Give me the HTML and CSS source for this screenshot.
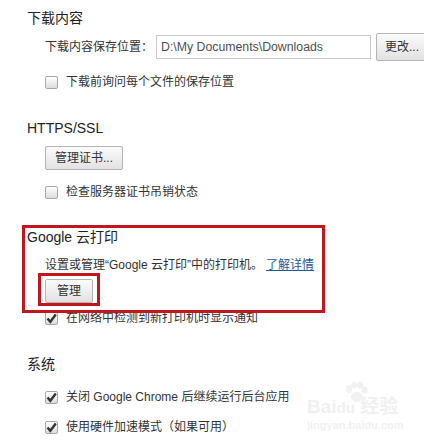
FILE: index.html
```html
<!DOCTYPE html>
<html lang="zh-CN">
<head>
    <meta charset="UTF-8">
    <title>设置</title>
    <link rel="stylesheet" href="styles.css">
</head>
<body>
    <!-- 下载内容 -->
    <div class="section section-first">
        <h3 class="section-title">下载内容</h3>
        <div class="section-body">
            <div class="path-row">
                <span class="path-label">下载内容保存位置：</span>
                <input type="text" class="path-input" value="D:\My Documents\Downloads" readonly>
                <button class="btn btn-change">更改...</button>
            </div>
            <label class="check-row row-after-path">
                <span class="checkbox"></span>
                <span>下载前询问每个文件的保存位置</span>
            </label>
        </div>
    </div>

    <!-- HTTPS/SSL -->
    <div class="section">
        <h3 class="section-title">HTTPS/SSL</h3>
        <div class="section-body">
            <button class="btn btn-block">管理证书...</button>
            <label class="check-row row-after-btn">
                <span class="checkbox"></span>
                <span>检查服务器证书吊销状态</span>
            </label>
        </div>
    </div>

    <!-- Google 云打印 -->
    <div class="section section-print">
        <h3 class="section-title">Google 云打印</h3>
        <div class="section-body">
            <p class="desc">设置或管理“Google 云打印”中的打印机。<a href="#" class="link">了解详情</a></p>
            <button class="btn btn-block btn-manage">管理</button>
            <label class="check-row row-under-frame">
                <span class="checkbox checked">
                    <svg width="11" height="11" viewBox="0 0 11 11"><path d="M1.5 5.5 L4.3 8.8 L9.8 1.6" fill="none" stroke="#333" stroke-width="2.4"/></svg>
                </span>
                <span>在网络中检测到新打印机时显示通知</span>
            </label>
        </div>
        <div class="frame frame-section"></div>
        <div class="frame frame-button"></div>
    </div>

    <!-- 系统 -->
    <div class="section">
        <h3 class="section-title">系统</h3>
        <div class="section-body">
            <label class="check-row row-system-first">
                <span class="checkbox checked">
                    <svg width="11" height="11" viewBox="0 0 11 11"><path d="M1.5 5.5 L4.3 8.8 L9.8 1.6" fill="none" stroke="#333" stroke-width="2.4"/></svg>
                </span>
                <span>关闭 Google Chrome 后继续运行后台应用</span>
            </label>
            <label class="check-row row-system-next">
                <span class="checkbox checked">
                    <svg width="11" height="11" viewBox="0 0 11 11"><path d="M1.5 5.5 L4.3 8.8 L9.8 1.6" fill="none" stroke="#333" stroke-width="2.4"/></svg>
                </span>
                <span>使用硬件加速模式（如果可用）</span>
            </label>
        </div>
    </div>

    <!-- watermark -->
    <div class="watermark">
        <svg class="paw" width="26" height="22" viewBox="0 0 26 22">
            <ellipse cx="6" cy="8" rx="3" ry="4" fill="#f1f1f1"/>
            <ellipse cx="11" cy="4" rx="3" ry="3.6" fill="#f1f1f1"/>
            <ellipse cx="17" cy="4" rx="3" ry="3.6" fill="#f1f1f1"/>
            <ellipse cx="21.5" cy="9" rx="3" ry="3.6" fill="#f1f1f1"/>
            <ellipse cx="14" cy="16" rx="6" ry="5" fill="#f1f1f1"/>
        </svg>
        <div class="wm-logo">Bai<span class="wm-du">du</span> 经验</div>
        <div class="wm-url">jingyan.baidu.com</div>
    </div>
</body>
</html>
```

FILE: styles.css
```css
html {
    overflow: hidden;
}

body {
    margin: 0;
    padding: 10px 0 0 27px;
    background-color: #fff;
    color: #333;
    font-family: "Liberation Sans", "Noto Sans CJK SC", sans-serif;
    font-size: 12px;
    line-height: 16px;
    position: relative;
    height: 437px;
}

.section {
    margin-top: 30px;
}

.section-first {
    margin-top: 0;
}

.section-print {
    position: relative;
    margin-top: 29px;
}

.section-title {
    margin: 0;
    font-size: 14px;
    line-height: 16px;
    font-weight: normal;
    color: #222;
}

.section-body {
    padding-left: 18px;
}

.path-row {
    display: flex;
    align-items: center;
    height: 28px;
    margin-top: 7px;
    white-space: nowrap;
}

.path-input {
    width: 215px;
    height: 24px;
    box-sizing: border-box;
    margin: 0 0 0 3px;
    padding: 0 4px;
    border: 1px solid #c9c9c9;
    color: #505050;
    font-family: "Liberation Sans", sans-serif;
    font-size: 12.3px;
    outline: none;
    flex-shrink: 0;
}

.btn {
    height: 24px;
    padding: 0 11px;
    border: 1px solid #b5b5b5;
    border-radius: 2px;
    background: linear-gradient(#fbfbfb, #e2e2e2);
    color: #333;
    font-family: "Liberation Sans", "Noto Sans CJK SC", sans-serif;
    font-size: 12px;
    line-height: 22px;
    cursor: pointer;
}

.btn-change {
    height: 28px;
    margin-left: 5px;
    padding: 0 8px;
    flex-shrink: 0;
}

.btn-block {
    display: block;
    margin-top: 10px;
    width: 78px;
    padding: 0;
}

.btn-manage {
    width: 48px;
    margin-top: 6px;
}

.check-row {
    display: flex;
    align-items: center;
    gap: 8px;
    height: 16px;
    white-space: nowrap;
}

.row-after-path {
    margin-top: 13px;
}

.row-after-btn {
    margin-top: 14px;
}

.row-under-frame {
    margin-top: 7px;
}

.row-system-first {
    margin-top: 17px;
}

.row-system-next {
    margin-top: 14px;
}

.checkbox {
    width: 13px;
    height: 13px;
    box-sizing: border-box;
    border: 1px solid #a8a8a8;
    border-radius: 2px;
    background: linear-gradient(#ffffff, #dcdcdc);
    display: flex;
    align-items: center;
    justify-content: center;
    flex-shrink: 0;
}

.checkbox svg {
    display: block;
}

.desc {
    margin: 12px 0 0 0;
    white-space: nowrap;
}

.link {
    margin-left: 3px;
    color: #1d5b9b;
    text-decoration: underline;
}

.frame {
    position: absolute;
    border: 3px solid #c0161e;
    pointer-events: none;
}

.frame-section {
    top: -4px;
    left: -5px;
    width: 297px;
    height: 82px;
}

.frame-button {
    top: 44px;
    left: 11px;
    width: 56px;
    height: 27px;
}

.watermark {
    position: absolute;
    left: 307px;
    top: 381px;
    width: 100px;
    color: #f0f0f0;
    pointer-events: none;
}

.paw {
    display: block;
    margin-left: 36px;
}

.wm-logo {
    margin-top: -6px;
    font-family: "Liberation Sans", "Noto Sans CJK SC", sans-serif;
    font-size: 19px;
    line-height: 20px;
    font-weight: bold;
    white-space: nowrap;
}

.wm-du {
    font-size: 15px;
}

.wm-url {
    font-size: 11px;
    line-height: 14px;
    font-weight: bold;
    white-space: nowrap;
}
```
